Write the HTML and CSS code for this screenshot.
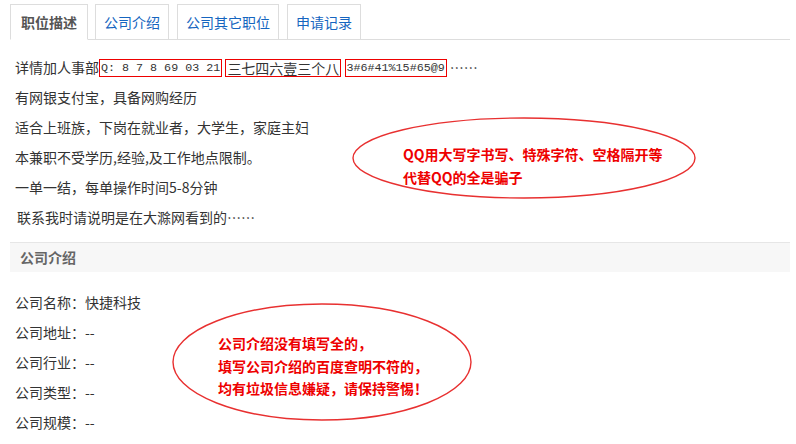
FILE: index.html
```
<!DOCTYPE html>
<html>
    <head>
        <meta charset="utf-8">
        <title>职位描述</title>
        <link rel="stylesheet" href="styles.css">
    </head>
    <body>
        <div class="wrap">
            <ul class="tabs">
                <li class="tab active">职位描述</li>
                <li class="tab">公司介绍</li>
                <li class="tab">公司其它职位</li>
                <li class="tab">申请记录</li>
            </ul>
            <div class="desc">
                <p>详情加人事部<span class="box mono">Q: 8 7 8 69 03 21</span> <span class="box">三七四六壹三个八</span> <span class="box mono">3#6#41%15#65@9</span> ……</p>
                <p>有网银支付宝，具备网购经历</p>
                <p>适合上班族，下岗在就业者，大学生，家庭主妇</p>
                <p>本兼职不受学历,经验,及工作地点限制。</p>
                <p>一单一结，每单操作时间5-8分钟</p>
                <p class="indent">联系我时请说明是在大滁网看到的……</p>
            </div>
            <div class="section-title">公司介绍</div>
            <div class="company">
                <p>公司名称：快捷科技</p>
                <p>公司地址：--</p>
                <p>公司行业：--</p>
                <p>公司类型：--</p>
                <p>公司规模：--</p>
            </div>
        </div>

        <svg class="marks" width="796" height="444">
            <ellipse cx="524" cy="158" rx="171" ry="40" />
            <ellipse cx="322" cy="362" rx="149" ry="58" />
        </svg>
        <div class="note note-qq">QQ用大写字书写、特殊字符、空格隔开等<br>代替QQ的全是骗子</div>
        <div class="note note-company">公司介绍没有填写全的，<br>填写公司介绍的百度查明不符的，<br>均有垃圾信息嫌疑，请保持警惕！</div>
    </body>
</html>
```

FILE: styles.css
```
body {
    margin: 0;
    background: #fff;
    color: #333;
    font-family: "Noto Sans CJK SC", "Liberation Sans", sans-serif;
    font-size: 14px;
}
p {
    margin: 0;
}
.wrap {
    padding: 4px 6px 0 10px;
}
.tabs {
    display: flex;
    margin: 0;
    padding: 0;
    list-style: none;
    border-bottom: 1px solid #ddd;
}
.tab {
    height: 34px;
    line-height: 34px;
    padding: 0 8px;
    margin-right: 8px;
    margin-bottom: -1px;
    border: 1px solid #ddd;
    border-bottom-color: #ddd;
    color: #1565c0;
    background: #fff;
}
.tab.active {
    padding: 0 10px;
    margin-right: 7px;
    color: #555;
    font-weight: bold;
    border-bottom-color: #fff;
}
.desc {
    margin-top: 12px;
    padding-left: 5px;
    line-height: 30px;
}
.indent {
    padding-left: 2px;
}
.box {
    display: inline-block;
    height: 16px;
    line-height: 16px;
    padding: 0 1px;
    border: 1px solid #e00;
    vertical-align: middle;
    margin-top: -3px;
}
.mono {
    font-family: "Liberation Mono", monospace;
    font-size: 11.7px;
}
.section-title {
    margin-top: 10px;
    height: 29px;
    line-height: 29px;
    padding-left: 10px;
    border-top: 1px solid #e6e6e6;
    background: #f7f7f7;
    color: #666;
    font-weight: bold;
}
.company {
    margin-top: 15px;
    padding-left: 5px;
    line-height: 30px;
}
.marks {
    position: absolute;
    left: 0;
    top: 0;
    pointer-events: none;
}
.marks ellipse {
    fill: none;
    stroke: #e83030;
    stroke-width: 1.4;
}
.note {
    position: absolute;
    color: #e00;
    font-weight: bold;
    font-size: 14px;
}
.note-qq {
    left: 403px;
    top: 143px;
    line-height: 23px;
}
.note-company {
    left: 218px;
    top: 332px;
    line-height: 22.5px;
}
```
